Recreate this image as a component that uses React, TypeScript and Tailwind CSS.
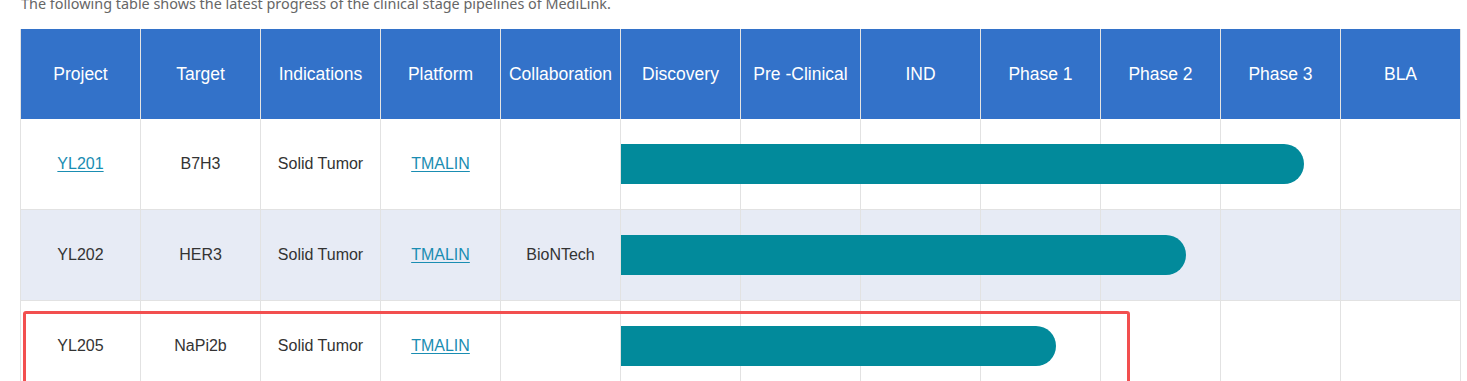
import React from 'react';

type Row = {
  project: string;
  projectLink?: boolean;
  target: string;
  indication: string;
  platform: string;
  collaboration: string;
  barWidth: number;
  shaded?: boolean;
};

const headers = [
  'Project',
  'Target',
  'Indications',
  'Platform',
  'Collaboration',
  'Discovery',
  'Pre -Clinical',
  'IND',
  'Phase 1',
  'Phase 2',
  'Phase 3',
  'BLA',
];

const rows: Row[] = [
  { project: 'YL201', projectLink: true, target: 'B7H3', indication: 'Solid Tumor', platform: 'TMALIN', collaboration: '', barWidth: 683 },
  { project: 'YL202', target: 'HER3', indication: 'Solid Tumor', platform: 'TMALIN', collaboration: 'BioNTech', barWidth: 565, shaded: true },
  { project: 'YL205', target: 'NaPi2b', indication: 'Solid Tumor', platform: 'TMALIN', collaboration: '', barWidth: 435 },
];

const Cell: React.FC<{ shaded?: boolean; children?: React.ReactNode; relative?: boolean }> = ({ shaded, children, relative }) => (
  <div
    className={`flex h-[91px] items-center justify-center border-r border-b border-[#e2e2e2] text-[16px] text-[#333] ${shaded ? 'bg-[#e7ebf5]' : 'bg-white'} ${relative ? 'relative' : ''}`}
  >
    {children}
  </div>
);

const LinkText: React.FC<{ children: React.ReactNode }> = ({ children }) => (
  <a href="#" className="text-[#1a8db2] underline underline-offset-2">
    {children}
  </a>
);

export default function App() {
  return (
    <div className="relative h-[381px] w-[1467px] overflow-hidden bg-white font-['Liberation_Sans',Arial,sans-serif]">
      <p className="mt-[-6px] pl-[21px] font-['Noto_Sans',sans-serif] text-[14.4px] leading-[20px] text-[#666]">
        The following table shows the latest progress of the clinical stage pipelines of MediLink.
      </p>

      <div className="ml-[20px] mt-[15px] grid w-[1441px] grid-cols-[repeat(12,120px)] border-l border-[#e2e2e2]">
        {headers.map((h) => (
          <div
            key={h}
            className="flex h-[90px] items-center justify-center border-r border-[#e4e4e4] bg-[#3372c9] text-[17.5px] text-white last:border-[#3372c9]"
          >
            {h}
          </div>
        ))}

        {rows.map((r) => (
          <React.Fragment key={r.project}>
            <Cell shaded={r.shaded}>
              {r.projectLink ? <LinkText>{r.project}</LinkText> : r.project}
            </Cell>
            <Cell shaded={r.shaded}>{r.target}</Cell>
            <Cell shaded={r.shaded}>{r.indication}</Cell>
            <Cell shaded={r.shaded}>
              <LinkText>{r.platform}</LinkText>
            </Cell>
            <Cell shaded={r.shaded}>{r.collaboration}</Cell>
            <Cell shaded={r.shaded} relative>
              <div
                className="absolute left-0 top-1/2 z-10 h-[40px] -translate-y-1/2 rounded-r-full bg-[#028a9b]"
                style={{ width: r.barWidth }}
              />
            </Cell>
            <Cell shaded={r.shaded} />
            <Cell shaded={r.shaded} />
            <Cell shaded={r.shaded} />
            <Cell shaded={r.shaded} />
            <Cell shaded={r.shaded} />
            <Cell shaded={r.shaded} />
          </React.Fragment>
        ))}
      </div>

      <div className="absolute left-[23px] top-[311px] z-20 h-[80px] w-[1107px] rounded-[3px] border-[3.5px] border-[#f24f4f]" />
    </div>
  );
}
